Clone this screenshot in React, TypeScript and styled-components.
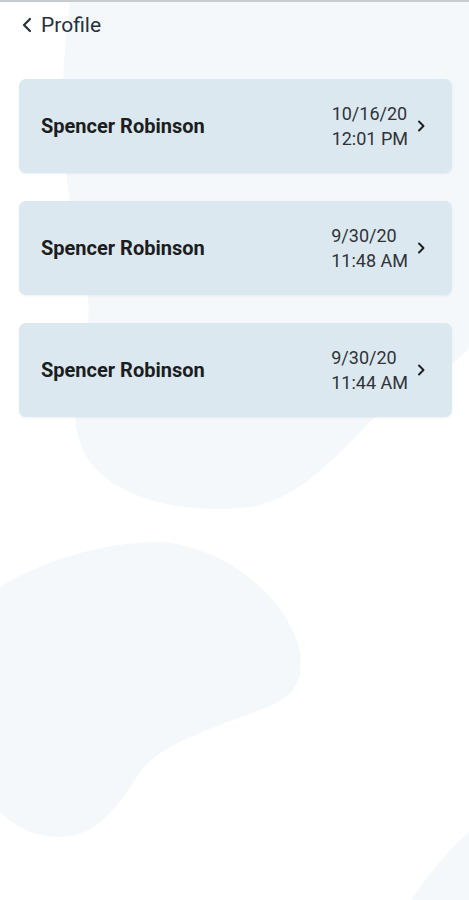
import React from "react";
import styled, { createGlobalStyle } from "styled-components";

const Global = createGlobalStyle`
  html, body { margin: 0; padding: 0; background: #ffffff; }
  body { font-family: Roboto, "Noto Sans", Arial, sans-serif; }
`;

const Screen = styled.div`
  position: relative;
  width: 469px;
  height: 900px;
  overflow: hidden;
  background: #ffffff;
  border-top: 2px solid #c9cccf;
  box-sizing: border-box;
`;

const Backdrop = styled.svg`
  position: absolute;
  inset: 0;
  z-index: 0;
`;

const Content = styled.div`
  position: relative;
  z-index: 1;
  display: flex;
  flex-direction: column;
  padding: 0 17px 0 19px;
`;

const Header = styled.div`
  display: flex;
  align-items: center;
  gap: 8px;
  height: 46px;
  padding-left: 2px;
  color: #27313d;
  font-size: 21px;
  margin-bottom: 31px;
`;

const List = styled.div`
  display: flex;
  flex-direction: column;
  gap: 28px;
`;

const Card = styled.div`
  display: flex;
  align-items: center;
  height: 94px;
  border-radius: 7px;
  background: #dce8f0;
  padding: 0 26px 0 22px;
  box-shadow: 0 1px 2px rgba(120, 140, 160, 0.12);
`;

const Name = styled.div`
  flex: 1;
  font-size: 20px;
  font-weight: 700;
  color: #1b1d20;
`;

const Stamp = styled.div`
  display: flex;
  flex-direction: column;
  align-items: flex-start;
  font-size: 18px;
  line-height: 25px;
  color: #2f3338;
  margin-right: 9px;
`;

const Blob = styled.path`
  fill: #f4f8fa;
`;

const Chevron = ({ dir }: { dir: "left" | "right" }) => (
  <svg width={dir === "left" ? 12 : 9} height={16} viewBox={dir === "left" ? "0 0 12 16" : "0 0 9 16"} fill="none">
    {dir === "left" ? (
      <path d="M9 2 L3 8 L9 14" stroke="#27313d" strokeWidth="2.2" strokeLinecap="round" strokeLinejoin="round" />
    ) : (
      <path d="M2 3.5 L6.5 8 L2 12.5" stroke="#1b1d20" strokeWidth="1.9" strokeLinecap="round" strokeLinejoin="round" />
    )}
  </svg>
);

const items = [
  { date: "10/16/20", time: "12:01 PM" },
  { date: "9/30/20", time: "11:48 AM" },
  { date: "9/30/20", time: "11:44 AM" },
];

export default function App() {
  return (
    <Screen>
      <Global />
      <Backdrop width="469" height="900" viewBox="0 0 469 900">
        <Blob d="M70 0 C62 60 60 120 66 170 C72 230 92 280 88 320 C80 370 62 420 90 460 C120 500 190 512 250 505 C300 498 340 450 375 415 C410 385 469 360 480 330 L480 -10 L75 -10 Z" />
        <Blob d="M0 585 C40 560 100 540 160 540 C230 545 290 600 300 650 C305 690 285 700 240 715 C190 735 160 745 140 770 C120 800 100 835 60 835 C30 835 10 820 0 810 Z" />
        <Blob d="M410 900 C430 870 450 845 475 825 L475 905 Z" />
      </Backdrop>
      <Content>
        <Header>
          <Chevron dir="left" />
          <span>Profile</span>
        </Header>
        <List>
          {items.map((it, i) => (
            <Card key={i}>
              <Name>Spencer Robinson</Name>
              <Stamp>
                <span>{it.date}</span>
                <span>{it.time}</span>
              </Stamp>
              <Chevron dir="right" />
            </Card>
          ))}
        </List>
      </Content>
    </Screen>
  );
}
